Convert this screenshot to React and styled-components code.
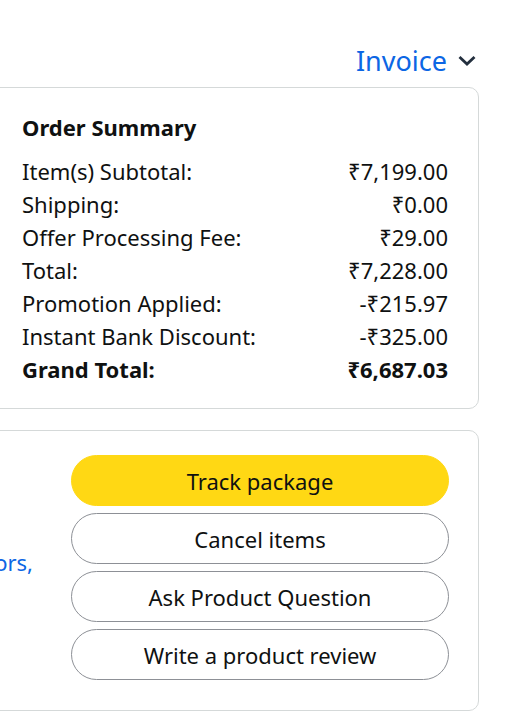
import styled, { createGlobalStyle } from 'styled-components';

const GlobalStyle = createGlobalStyle`
  html, body {
    margin: 0;
    padding: 0;
    background: #ffffff;
    overflow: hidden;
  }
  body {
    font-family: "Noto Sans", "Open Sans", sans-serif;
    color: #0f1111;
  }
`;

const Page = styled.div`
  margin-left: -220px;
  padding: 37px 29px 0 0;
  display: flex;
  flex-direction: column;
`;

const HeaderRow = styled.div`
  display: flex;
  justify-content: flex-end;
  align-items: center;
  gap: 10px;
  padding-right: 2px;
  height: 46px;
  margin-bottom: 4px;
`;

const InvoiceLink = styled.a`
  font-size: 27px;
  color: #0c66e4;
  text-decoration: none;
`;

const Card = styled.div`
  border: 1px solid #d5d9d9;
  border-radius: 10px;
  display: grid;
  grid-template-columns: minmax(0, 1fr) ${(p) => p.$right}px;
  column-gap: ${(p) => p.$gap}px;
  padding: ${(p) => p.$pad};
  margin-bottom: ${(p) => p.$mb || 0}px;
`;

const Summary = styled.div`
  display: flex;
  flex-direction: column;
  font-size: 22px;
  line-height: 33px;
`;

const Heading = styled.h2`
  margin: 0 0 11px;
  font-size: 22px;
  font-weight: 700;
  line-height: 33px;
`;

const Row = styled.div`
  display: flex;
  justify-content: space-between;
  font-weight: ${(p) => (p.$bold ? 700 : 400)};
`;

const Side = styled.div`
  display: flex;
  justify-content: flex-end;
  align-items: center;
  min-width: 0;
  margin-top: -12px;
`;

const SideLink = styled.a`
  white-space: nowrap;
  font-size: 22px;
  color: #0c66e4;
  text-decoration: none;
`;

const Actions = styled.div`
  display: flex;
  flex-direction: column;
  gap: 7px;
`;

const ActionButton = styled.button`
  height: 51px;
  border-radius: 26px;
  font-family: inherit;
  font-size: 22px;
  color: #0f1111;
  background: ${(p) => (p.$primary ? '#ffd814' : '#ffffff')};
  border: 1px solid ${(p) => (p.$primary ? '#ffd814' : '#8d9096')};
  cursor: pointer;
`;

const rows = [
  ['Item(s) Subtotal:', '₹7,199.00'],
  ['Shipping:', '₹0.00'],
  ['Offer Processing Fee:', '₹29.00'],
  ['Total:', '₹7,228.00'],
  ['Promotion Applied:', '-₹215.97'],
  ['Instant Bank Discount:', '-₹325.00'],
];

const buttons = ['Track package', 'Cancel items', 'Ask Product Question', 'Write a product review'];

const App = () => {
  return (
    <>
      <GlobalStyle />
      <Page>
        <HeaderRow>
          <InvoiceLink href="#">Invoice</InvoiceLink>
          <svg width="20" height="13" viewBox="0 0 20 13">
            <path d="M2.5 3 L10 10 L17.5 3" fill="none" stroke="#232f3e" strokeWidth="2.8" />
          </svg>
        </HeaderRow>
        <Card $right={426} $gap={0} $pad="23px 30px 22px 0" $mb={21}>
          <div />
          <Summary>
            <Heading>Order Summary</Heading>
            {rows.map(([label, value]) => (
              <Row key={label}>
                <span>{label}</span>
                <span>{value}</span>
              </Row>
            ))}
            <Row $bold>
              <span>Grand Total:</span>
              <span>₹6,687.03</span>
            </Row>
          </Summary>
        </Card>
        <Card $right={378} $gap={38} $pad="24px 29px 30px 0">
          <Side>
            <SideLink href="#">Contact vendors,</SideLink>
          </Side>
          <Actions>
            {buttons.map((label, i) => (
              <ActionButton key={label} $primary={i === 0}>
                {label}
              </ActionButton>
            ))}
          </Actions>
        </Card>
      </Page>
    </>
  );
};

export default App;
